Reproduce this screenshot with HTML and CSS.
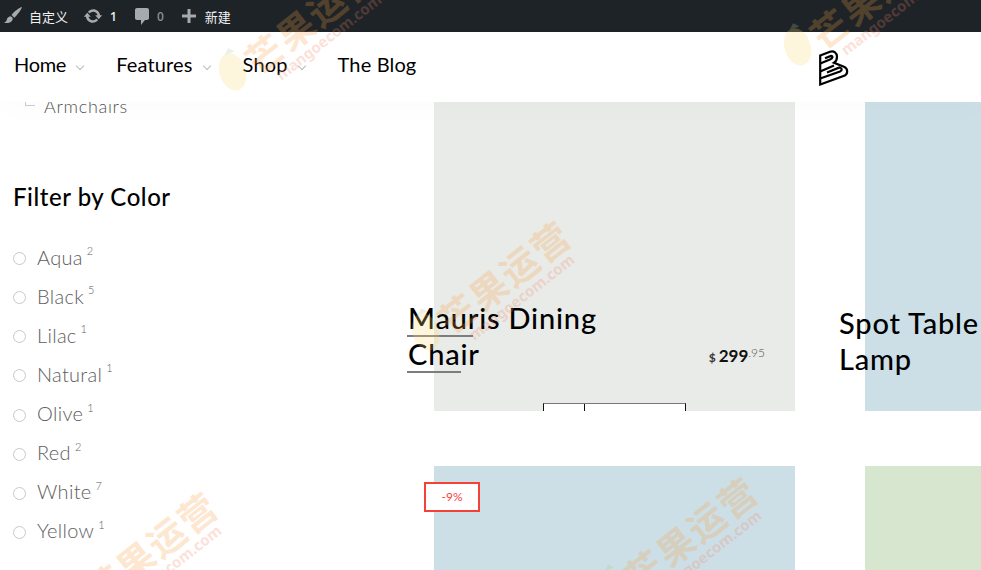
FILE: index.html
```html
<!DOCTYPE html>
<html lang="zh-CN">
<head>
  <meta charset="UTF-8" />
  <meta name="viewport" content="width=device-width, initial-scale=1.0"/>
  <title>Shop</title>
  <link rel="stylesheet" href="styles.css">
</head>
<body>
  <div class="adminbar">
    <a class="ab-item ab-brush">
      <svg class="ab-icon" viewBox="0 0 20 20"><path d="M19 1c-2.500.6-8 4.500-10.500 8l2.800 2.800C14 9.500 18.400 3.600 19 1zM7.500 10.300c-2.200.3-3.300 1.600-3.800 3.600-.3 1.300-1.500 2.200-2.700 2.800 2.800.9 6.500.3 8.200-2.200.8-1.300.7-2.400 0-3.300l-1.700-.9z"/></svg>
      <span class="ab-text">自定义</span>
    </a>
    <a class="ab-item ab-update">
      <svg class="ab-icon" viewBox="0 0 20 20"><path d="M10.200 3.280c3.530 0 6.430 2.610 6.920 6h2.080l-3.500 4-3.500-4h2.320c-.45-1.970-2.210-3.450-4.320-3.450-1.450 0-2.730.71-3.540 1.780L4.950 5.660C6.230 4.200 8.110 3.280 10.200 3.280zm-.4 13.440c-3.520 0-6.430-2.610-6.920-6H.8l3.500-4c1.170 1.330 2.330 2.670 3.500 4H5.480c.45 1.970 2.210 3.450 4.320 3.450 1.450 0 2.730-.71 3.540-1.780l1.710 1.950c-1.280 1.460-3.150 2.380-5.250 2.380z"/></svg>
      <span class="ab-count">1</span>
    </a>
    <a class="ab-item ab-comments">
      <svg class="ab-icon" viewBox="0 0 20 20"><path d="M5 2h10c1.100 0 2 .9 2 2v8c0 1.100-.9 2-2 2h-2l-4 5v-5H5c-1.100 0-2-.9-2-2V4c0-1.100.9-2 2-2z"/></svg>
      <span class="ab-count ab-muted">0</span>
    </a>
    <a class="ab-item ab-new">
      <svg class="ab-icon" viewBox="0 0 20 20"><path d="M17 8.500v3h-5.500V17h-3v-5.500H3v-3h5.500V3h3v5.500H17z"/></svg>
      <span class="ab-text">新建</span>
    </a>
  </div>

  <header class="site-header">
    <nav class="main-nav">
      <a class="nav-link has-sub">Home</a>
      <a class="nav-link has-sub">Features</a>
      <a class="nav-link has-sub">Shop</a>
      <a class="nav-link">The Blog</a>
    </nav>
    <svg class="logo" viewBox="0 0 30 36" fill="none" stroke="#000" stroke-width="2.200">
      <path d="M1.200 5.500 11 1.800c4-1.200 7 1 7 5 0 2.800-1 4.800-3 6l10.500 4.200c3.500 1.800 3.500 6.800.3 8.500L1.200 34.500z"/>
      <path d="M1.200 13.500 11 9.500c3-1 3.200-3.600 1-3.600L6 8.200"/>
      <path d="M1.200 21.500 15 15.500"/>
      <path d="M1.200 28.500 21 21.500c2.600-1.300 2-3.500-.5-4L8 22.500"/>
    </svg>
  </header>

  <main class="shop">
    <aside class="sidebar">
      <div class="cat-child"><span class="cat-tick"></span>Armchairs</div>
      <h3 class="widget-title">Filter by Color</h3>
      <ul class="filter-list">
        <li class="filter-item"><span class="radio"></span><span class="filter-name">Aqua</span><sup class="filter-count">2</sup></li>
        <li class="filter-item"><span class="radio"></span><span class="filter-name">Black</span><sup class="filter-count">5</sup></li>
        <li class="filter-item"><span class="radio"></span><span class="filter-name">Lilac</span><sup class="filter-count">1</sup></li>
        <li class="filter-item"><span class="radio"></span><span class="filter-name">Natural</span><sup class="filter-count">1</sup></li>
        <li class="filter-item"><span class="radio"></span><span class="filter-name">Olive</span><sup class="filter-count">1</sup></li>
        <li class="filter-item"><span class="radio"></span><span class="filter-name">Red</span><sup class="filter-count">2</sup></li>
        <li class="filter-item"><span class="radio"></span><span class="filter-name">White</span><sup class="filter-count">7</sup></li>
        <li class="filter-item"><span class="radio"></span><span class="filter-name">Yellow</span><sup class="filter-count">1</sup></li>
      </ul>
    </aside>

    <section class="products">
      <article class="product product-grey">
        <div class="product-info">
          <h2 class="product-title">
            <span class="title-line rule-first">Mauris Dining</span>
            <span class="title-line rule-second">Chair</span>
          </h2>
          <div class="price"><span class="cur">$</span><b>299</b><span class="cents">.95</span></div>
        </div>
        <div class="actions"><span class="act-small"></span><span class="act-big"></span></div>
      </article>

      <article class="product product-blue">
        <div class="product-info">
          <h2 class="product-title">
            <span class="title-line">Spot Table</span>
            <span class="title-line">Lamp</span>
          </h2>
        </div>
      </article>

      <article class="product product-blue product-low">
        <span class="badge">-9%</span>
      </article>

      <article class="product product-green product-low"></article>
    </section>
  </main>

  <!-- site watermark, sits over everything -->
  <div class="wm wm-a"><svg class="wm-mango" viewBox="0 0 34 46"><ellipse cx="17" cy="25" rx="13" ry="19" fill="#fdd873"/><path d="M14 7 20 1l5 5z" fill="#a9c99a"/></svg><div class="wm-words"><div class="wm-cn">芒果运营</div><div class="wm-en">mangoecom.com</div></div></div>
  <div class="wm wm-b"><svg class="wm-mango" viewBox="0 0 34 46"><ellipse cx="17" cy="25" rx="13" ry="19" fill="#fdd873"/><path d="M14 7 20 1l5 5z" fill="#a9c99a"/></svg><div class="wm-words"><div class="wm-cn">芒果运营</div><div class="wm-en">mangoecom.com</div></div></div>
  <div class="wm wm-c"><svg class="wm-mango" viewBox="0 0 34 46"><ellipse cx="17" cy="25" rx="13" ry="19" fill="#fdd873"/><path d="M14 7 20 1l5 5z" fill="#a9c99a"/></svg><div class="wm-words"><div class="wm-cn">芒果运营</div><div class="wm-en">mangoecom.com</div></div></div>
  <div class="wm wm-d"><svg class="wm-mango" viewBox="0 0 34 46"><ellipse cx="17" cy="25" rx="13" ry="19" fill="#fdd873"/><path d="M14 7 20 1l5 5z" fill="#a9c99a"/></svg><div class="wm-words"><div class="wm-cn">芒果运营</div><div class="wm-en">mangoecom.com</div></div></div>
  <div class="wm wm-e"><svg class="wm-mango" viewBox="0 0 34 46"><ellipse cx="17" cy="25" rx="13" ry="19" fill="#fdd873"/><path d="M14 7 20 1l5 5z" fill="#a9c99a"/></svg><div class="wm-words"><div class="wm-cn">芒果运营</div><div class="wm-en">mangoecom.com</div></div></div>
</body>
</html>
```

FILE: styles.css
```css
html, body {
  margin: 0;
  height: 570px;
  overflow: hidden;
}

body {
  position: relative;
  background: #fff;
  font-family: Lato, "Noto Sans", sans-serif;
  color: #000;
}

/* admin bar */
.adminbar {
  display: flex;
  align-items: center;
  height: 32px;
  background: #1d2327;
  font-family: "Noto Sans CJK SC", "Noto Sans", sans-serif;
  font-size: 13px;
  color: #f0f0f1;
}

.ab-item {
  display: flex;
  align-items: center;
}

.ab-icon {
  width: 20px;
  height: 20px;
  fill: #a7aaad;
}

.ab-brush { margin-left: 3px; gap: 6px; }
.ab-update { margin-left: 15px; gap: 7px; }
.ab-comments { margin-left: 15px; gap: 5px; }
.ab-new { margin-left: 15px; gap: 6px; }

.ab-count { font-family: "Open Sans", sans-serif; font-size: 12px; font-weight: 600; }
.ab-muted { color: #8c8f94; }

/* header */
.site-header {
  position: relative;
  z-index: 2;
  display: flex;
  align-items: center;
  justify-content: space-between;
  height: 70px;
  padding: 0 132px 0 14px;
  background: #fff;
  box-shadow: 0 8px 30px rgba(0, 0, 0, 0.015);
}

.main-nav {
  display: flex;
  gap: 50px;
  margin-bottom: 6px;
}

.nav-link {
  position: relative;
  font-size: 20px;
  line-height: 24px;
  letter-spacing: 0.15px;
  color: #000;
}

.nav-link:first-child { letter-spacing: -0.3px; }

.has-sub::after {
  content: "";
  position: absolute;
  right: -17px;
  top: 11px;
  width: 5px;
  height: 5px;
  border-right: 1px solid #bbb;
  border-bottom: 1px solid #bbb;
  transform: rotate(45deg);
}

.logo {
  width: 30px;
  height: 36px;
  margin-top: 1px;
}

/* page body */
.shop {
  display: flex;
  height: 468px;
  overflow: hidden;
}

.sidebar {
  flex: 0 0 420px;
  box-sizing: border-box;
  padding-left: 13px;
  margin-top: -8px;
}

.cat-child {
  position: relative;
  padding-left: 31px;
  font-size: 18px;
  font-weight: 300;
  line-height: 24px;
  letter-spacing: 0.7px;
  color: #555;
}

.cat-tick {
  position: absolute;
  left: 12px;
  top: 3px;
  width: 9px;
  height: 8px;
  border-left: 1px solid #ccc;
  border-bottom: 1px solid #ccc;
}

.widget-title {
  margin: 64px 0 0;
  font-size: 24px;
  font-weight: 500;
  line-height: 30px;
  letter-spacing: 0.55px;
}

.filter-list {
  list-style: none;
  margin: 27px 0 0;
  padding: 0;
}

.filter-item {
  display: flex;
  align-items: center;
  height: 39.140px;
  color: #5e5e5e;
}

.radio {
  flex: none;
  box-sizing: border-box;
  width: 13px;
  height: 13px;
  margin-right: 11px;
  border: 1px solid #c8c8c8;
  border-radius: 50%;
}

.filter-name {
  margin-bottom: 4px;
  font-size: 20px;
  font-weight: 300;
  letter-spacing: 0.3px;
}

.filter-count {
  margin: -16px 0 0 4px;
  font-size: 11px;
  font-weight: 300;
  line-height: 1;
}

/* product grid */
.products {
  display: grid;
  grid-template-columns: 361px 361px;
  grid-template-rows: 309px 200px;
  gap: 55px 70px;
  margin-left: 14px;
}

.product {
  position: relative;
  display: flex;
  flex-direction: column;
  justify-content: flex-end;
}

.product-grey { background: #e9ebe8; }
.product-blue { background: #cddfe6; padding-bottom: 34px; box-sizing: border-box; }
.product-green { background: #d7e7cf; }
.product-low { justify-content: flex-start; padding-bottom: 0; }

.product-info {
  display: flex;
  align-items: flex-end;
  justify-content: space-between;
  margin-left: -26px;
  padding-right: 30px;
}

.product-title {
  margin: 0;
  font-size: 29px;
  font-weight: 500;
  line-height: 36px;
  letter-spacing: 0.8px;
}

.title-line {
  position: relative;
  display: block;
  white-space: nowrap;
}

.rule-first::after,
.rule-second::after {
  content: "";
  position: absolute;
  left: -1px;
  bottom: -1px;
  height: 2px;
  background: #7d7d7d;
}

.rule-first::after { width: 66px; }
.rule-second::after { width: 54px; }

.price {
  margin-bottom: 4px;
  font-size: 17px;
  line-height: 20px;
  color: #111;
}

.cur { font-size: 12px; font-weight: 700; margin-right: 3px; color: #333; }
.price b { font-weight: 700; }
.cents { position: relative; top: -5px; font-size: 12px; font-weight: 300; color: #555; }

.actions {
  display: flex;
  box-sizing: border-box;
  height: 8px;
  margin: 31px 0 0 109px;
  width: 143px;
  background: #fff;
  border-top: 1px solid #777;
  border-left: 1px solid #111;
  border-right: 1px solid #111;
}

.act-small {
  width: 40px;
  border-right: 1px solid #111;
}

.badge {
  position: absolute;
  left: -10px;
  top: 16px;
  box-sizing: border-box;
  width: 56px;
  height: 30px;
  border: 2px solid #f44336;
  background: #fff;
  font-size: 12px;
  line-height: 26px;
  text-align: center;
  color: #f4433f;
}

/* watermark */
.wm {
  position: absolute;
  z-index: 5;
  display: flex;
  align-items: center;
  height: 60px;
  transform: rotate(-38deg);
  transform-origin: 17px 30px;
  pointer-events: none;
  opacity: 0.24;
}

.wm-a { left: 215px; top: 40px; }
.wm-b { left: 780px; top: 15px; }
.wm-c { left: 408px; top: 300px; }
.wm-d { left: 55px; top: 571px; }
.wm-e { left: 595px; top: 556px; }

.wm-mango {
  flex: none;
  width: 34px;
  height: 46px;
  transform: rotate(20deg);
}

.wm-words {
  margin-top: 28px;
  white-space: nowrap;
  font-family: "Noto Sans CJK SC", sans-serif;
}

.wm-cn {
  font-size: 37px;
  font-weight: 700;
  line-height: 38px;
  letter-spacing: 2px;
  color: #f9a03f;
}

.wm-en {
  margin-left: 15px;
  font-family: "Noto Sans", sans-serif;
  font-size: 15px;
  font-weight: 700;
  line-height: 16px;
  color: #f2846a;
}
```
